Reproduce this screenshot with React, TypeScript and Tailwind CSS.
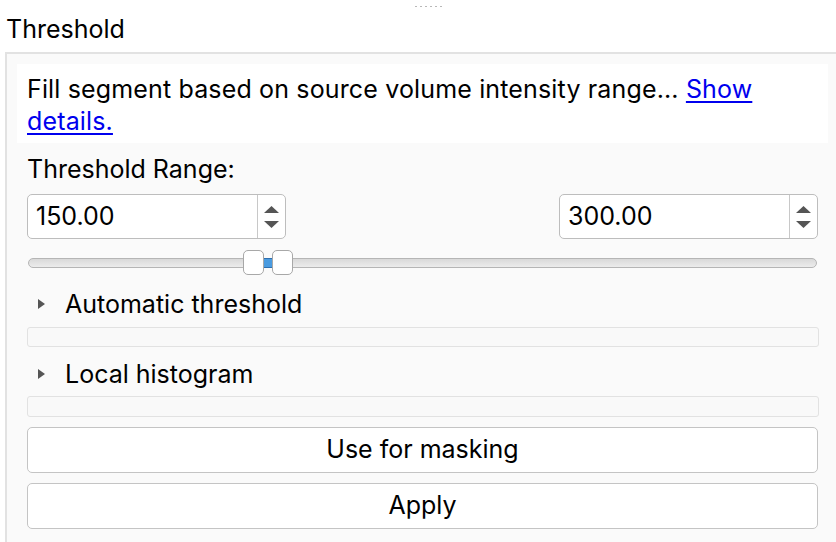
import React from "react";

function SpinBox({ value }: { value: string }) {
  return (
    <div className="flex h-[45px] w-[259px] rounded-[5px] border-[1.5px] border-[#bdbdbd] bg-white">
      <div className="flex flex-1 items-center pl-[8px] text-[25px] text-black">{value}</div>
      <div className="flex w-[28px] flex-col items-center justify-center gap-[8px] border-l-[1.5px] border-[#c8c8c8]">
        <svg width="15" height="7" viewBox="0 0 15 7"><polygon points="7.5,0 15,7 0,7" fill="#555555" /></svg>
        <svg width="15" height="7" viewBox="0 0 15 7"><polygon points="0,0 15,0 7.5,7" fill="#555555" /></svg>
      </div>
    </div>
  );
}

function Collapsible({ label }: { label: string }) {
  return (
    <div className="flex h-[32px] items-center">
      <svg className="ml-[11px]" width="7" height="10" viewBox="0 0 7 10"><polygon points="0,0 7,5 0,10" fill="#555555" /></svg>
      <span className="ml-[20px] text-[25px] leading-[32px] text-black">{label}</span>
    </div>
  );
}

export default function App() {
  return (
    <div className="relative h-[542px] w-[836px] overflow-hidden bg-white" style={{ fontFamily: "Inter, 'Liberation Sans', sans-serif" }}>
      <div className="flex h-[7px] items-end justify-center gap-[3px] pl-[20px]">
        {[0, 1, 2, 3, 4, 5].map((i) => (
          <div key={i} className="h-[1px] w-[2px] bg-[#b8b8b8]" />
        ))}
      </div>
      <div className="ml-[6px] mt-[6px] text-[25px] leading-[32px] text-black">Threshold</div>
      <div className="ml-[5px] mt-[7px] h-[600px] border-l-2 border-t-2 border-[#e2e2e2] bg-[#fafafa] pl-[10px] pt-[10px]">
        <div className="w-[811px] bg-white px-[10px] pb-[6px] pt-[9px] text-[25px] leading-[32px] tracking-[0.15px] text-black">
          Fill segment based on source volume intensity range...{" "}
          <span className="text-[#0000ee] underline underline-offset-[3px]">Show details.</span>
        </div>
        <div className="w-[811px] px-[10px]">
          <div className="mt-[10px] text-[25px] leading-[32px] text-black">Threshold Range:</div>
          <div className="mt-[9px] flex justify-between">
            <SpinBox value="150.00" />
            <SpinBox value="300.00" />
          </div>
          <div className="relative mt-[11px] h-[25px] w-[790px]">
            <div className="absolute left-[1px] right-0 top-[8px] h-[10px] rounded-full border border-[#b5b5b5] bg-gradient-to-b from-[#d9d9d9] to-[#ececec]" />
            <div className="absolute left-[236px] top-[8px] h-[10px] w-[10px] border border-[#2d6fb0] bg-[#4a9be0]" />
            <div className="absolute left-[216px] top-0 h-[25px] w-[21px] rounded-[5px] border border-[#a8a8a8] bg-white" />
            <div className="absolute left-[245px] top-0 h-[25px] w-[21px] rounded-[5px] border border-[#a8a8a8] bg-white" />
          </div>
          <div className="mt-[13px]">
            <Collapsible label="Automatic threshold" />
          </div>
          <div className="mt-[7px] h-[20px] w-[792px] rounded-[3px] border-[1.5px] border-[#e2e2e2] bg-[#f9f9f9]" />
          <div className="mt-[11px]">
            <Collapsible label="Local histogram" />
          </div>
          <div className="mt-[6px] h-[21px] w-[792px] rounded-[3px] border-[1.5px] border-[#e2e2e2] bg-[#f9f9f9]" />
          <button className="mt-[10px] flex h-[46px] w-[791px] items-center justify-center rounded-[5px] border-[1.5px] border-[#c4c4c4] bg-white text-[25px] text-black">
            Use for masking
          </button>
          <button className="mt-[10px] flex h-[46px] w-[791px] items-center justify-center rounded-[5px] border-[1.5px] border-[#c4c4c4] bg-white text-[25px] text-black">
            Apply
          </button>
        </div>
      </div>
    </div>
  );
}
